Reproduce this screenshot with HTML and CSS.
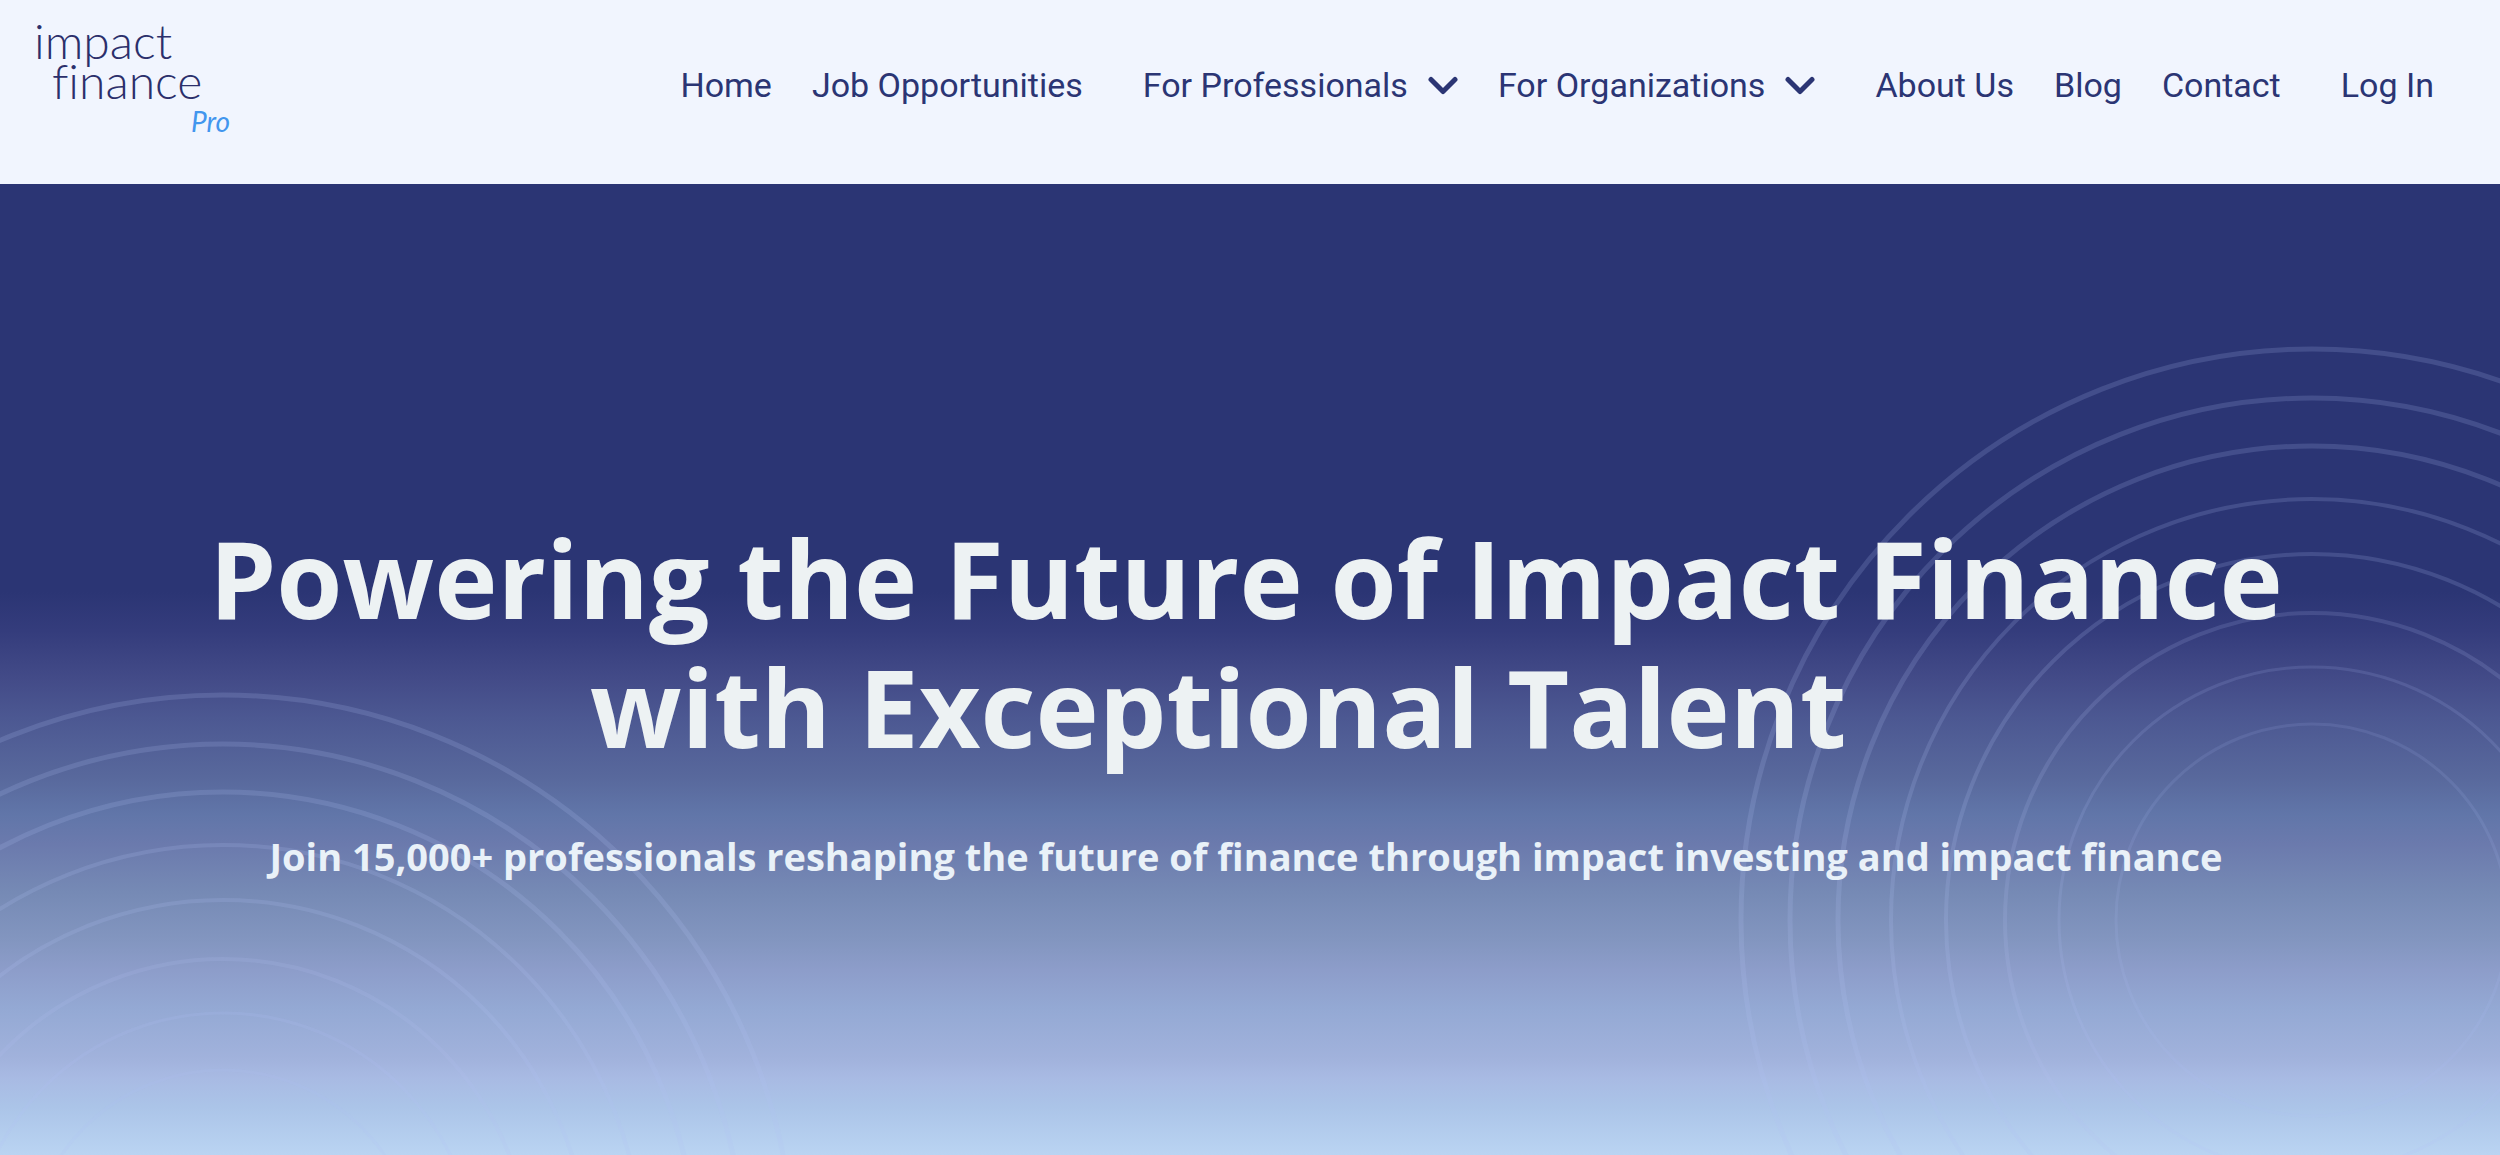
FILE: index.html
```html
<!DOCTYPE html>
<html lang="en">
<head>
<meta charset="utf-8">
<meta name="viewport" content="width=device-width, initial-scale=1">
<title>Impact Finance Pro</title>
<link rel="stylesheet" href="styles.css">
</head>
<body>
<header class="site-header">
  <a class="logo" href="#">
    <span class="logo-impact">impact</span>
    <span class="logo-finance">finance</span>
    <span class="logo-pro">Pro</span>
  </a>
  <nav class="nav" aria-label="Main">
    <div class="nav-group">
      <a href="#">Home</a>
      <a href="#">Job Opportunities</a>
    </div>
    <div class="nav-group">
      <button type="button" class="nav-menu">For Professionals
        <svg class="chevron" viewBox="0 0 30 19" aria-hidden="true"><path d="M3 3.500 15 15.500 27 3.500"/></svg>
      </button>
      <button type="button" class="nav-menu">For Organizations
        <svg class="chevron" viewBox="0 0 30 19" aria-hidden="true"><path d="M3 3.500 15 15.500 27 3.500"/></svg>
      </button>
    </div>
    <div class="nav-group">
      <a href="#">About Us</a>
      <a href="#">Blog</a>
      <a href="#">Contact</a>
    </div>
    <div class="nav-group">
      <a href="#">Log In</a>
    </div>
  </nav>
</header>
<main class="hero">
  <svg class="rings rings-left" viewBox="0 0 1150 1150" aria-hidden="true">
    <circle cx="575" cy="575" r="571" stroke-width="5"/>
    <circle cx="575" cy="575" r="522" stroke-width="5"/>
    <circle cx="575" cy="575" r="474" stroke-width="5"/>
    <circle cx="575" cy="575" r="421" stroke-width="4"/>
    <circle cx="575" cy="575" r="366" stroke-width="4"/>
    <circle cx="575" cy="575" r="307" stroke-width="4" opacity=".9"/>
    <circle cx="575" cy="575" r="253" stroke-width="3" opacity=".8"/>
    <circle cx="575" cy="575" r="196" stroke-width="3" opacity=".7"/>
  </svg>
  <svg class="rings rings-right" viewBox="0 0 1150 1150" aria-hidden="true">
    <circle cx="575" cy="575" r="571" stroke-width="5"/>
    <circle cx="575" cy="575" r="522" stroke-width="5"/>
    <circle cx="575" cy="575" r="474" stroke-width="5"/>
    <circle cx="575" cy="575" r="421" stroke-width="4"/>
    <circle cx="575" cy="575" r="366" stroke-width="4"/>
    <circle cx="575" cy="575" r="307" stroke-width="4" opacity=".9"/>
    <circle cx="575" cy="575" r="253" stroke-width="3" opacity=".8"/>
    <circle cx="575" cy="575" r="196" stroke-width="3" opacity=".7"/>
  </svg>
  <h1>Powering the Future of Impact Finance<br>with Exceptional Talent&nbsp;&nbsp;</h1>
  <p>Join 15,000+ professionals reshaping the future of finance through impact investing and impact finance</p>
</main>
</body>
</html>
```
FILE: styles.css
```css
* {
  box-sizing: border-box;
}

body {
  margin: 0;
  min-height: 100vh;
  display: flex;
  flex-direction: column;
  font-family: Roboto, "Liberation Sans", sans-serif;
  color: #2b3574;
}

.site-header {
  display: flex;
  justify-content: space-between;
  align-items: center;
  min-height: 184px;
  padding: 0 66px 14px 34px;
  background: #f1f5fe;
}

.logo {
  display: flex;
  flex-direction: column;
  width: 196px;
  padding-bottom: 8px;
  font-family: Lato, sans-serif;
  font-weight: 300;
  font-size: 48px;
  line-height: 40px;
  font-variant-ligatures: none;
  color: #2b2f6b;
  text-decoration: none;
}

.logo-finance {
  padding-left: 18px;
}

.logo-pro {
  align-self: flex-end;
  font-size: 28px;
  font-style: italic;
  font-weight: 400;
  color: #4296ee;
}

.nav,
.nav-group {
  display: flex;
  align-items: center;
}

.nav {
  gap: 60px;
}

.nav-group {
  gap: 40px;
}

.nav a,
.nav-menu {
  font: 400 34px/40px Roboto, "Liberation Sans", sans-serif;
  color: inherit;
  text-decoration: none;
  white-space: nowrap;
}

.nav-menu {
  display: flex;
  align-items: center;
  gap: 20px;
  padding: 0;
  border: 0;
  background: none;
}

.chevron {
  width: 30px;
  height: 19px;
  fill: none;
  stroke: currentColor;
  stroke-width: 5;
  stroke-linecap: round;
  stroke-linejoin: round;
}

.hero {
  position: relative;
  flex: 1;
  overflow: hidden;
  padding: 329px 40px 64px 32px;
  text-align: center;
  font-family: "Open Sans", "Noto Sans", sans-serif;
  font-weight: 700;
  color: #edf2f3;
  background: linear-gradient(
    #2b3574 0,
    #2b3574 42%,
    #343c7c 46%,
    #434b88 51%,
    #4c5892 55%,
    #58689c 61%,
    #6176a9 65%,
    #6b7aad 68%,
    #768ab5 73%,
    #8396c0 78%,
    #8d9dca 81%,
    #94a9d4 85%,
    #a1b2dc 90%,
    #a8bae3 92%,
    #abc4e8 95%,
    #bad4f2 100%
  );
}

.hero h1,
.hero p {
  position: relative;
  margin: 0;
}

.hero h1 {
  font-size: 107px;
  line-height: 129px;
}

.hero p {
  margin-top: 57px;
  font-size: 38px;
  line-height: 56px;
  color: #e9f1f8;
}

/* Decorative circles behind the copy */
.rings {
  position: absolute;
  width: 1150px;
  height: 1150px;
  fill: none;
  stroke: rgba(178, 194, 245, 0.18);
}

.rings-left {
  left: -352px;
  top: 507px;
}

.rings-right {
  right: -387px;
  top: 161px;
}
```
